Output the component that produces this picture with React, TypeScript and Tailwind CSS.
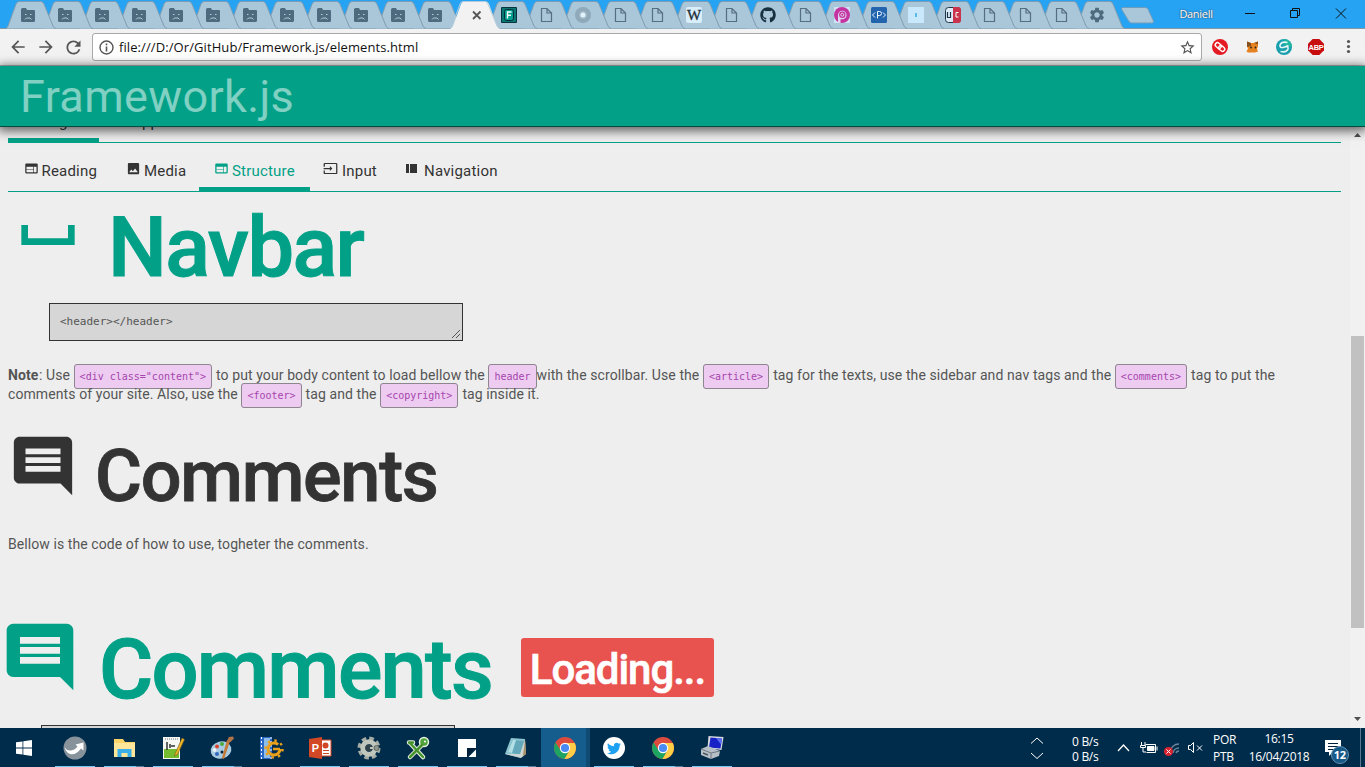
import React from "react";
import { MdWeb, MdImage, MdInput, MdSpaceBar, MdComment, MdSettings, MdStarBorder, MdArrowBack, MdArrowForward, MdRefresh } from "react-icons/md";
import { FaGithub, FaTwitter } from "react-icons/fa";

type TabKind = "sad" | "active" | "e" | "file" | "disc" | "wiki" | "github" | "p" | "code" | "info" | "uc" | "gear";

const tabs: TabKind[] = [
  ...Array<TabKind>(12).fill("sad"),
  "active", "e", "file", "disc", "file", "file", "wiki", "file", "github", "file", "p", "code", "info", "uc", "file", "file", "file", "gear",
];

function TabIcon({ kind }: { kind: TabKind }) {
  switch (kind) {
    case "sad":
      return (
        <g>
          <path d="M1 3.5Q1 2 2.500 2H6L7 4H14Q15 4 15 5V14.500Q15 16 13.500 16H2.500Q1 16 1 14.500Z" fill="#4d6a7f" />
          <path d="M5 8.500h1.500M10 8.500h1.500M5 13.500l1.500-1.500h3.500l1.500 1.500" stroke="#c0d6e4" fill="none" strokeWidth=".9" />
        </g>
      );
    case "file":
      return <path d="M3.500 2.500H9L13.500 7V15.500H3.500ZM9 2.500V7H13.500" fill="none" stroke="#566f80" strokeWidth="1.200" />;
    case "active":
      return <path d="M7.500 5.500L15 13M15 5.500L7.500 13" stroke="#555" strokeWidth="1.800" />;
    case "e":
      return (
        <g>
          <rect x="0" y="1" width="16" height="16" rx="1" fill="#06343e" />
          <rect x="1" y="2" width="14" height="14" fill="#0a7672" />
          <rect x="3.500" y="3.500" width="9" height="11" rx="2" fill="#03a092" stroke="#022f38" />
          <path d="M6.500 12.500V6H10.500M6.500 9.200H10" fill="none" stroke="#fff" strokeWidth="1.400" />
        </g>
      );
    case "disc":
      return (
        <g>
          <circle cx="8" cy="9" r="8" fill="#8fa9ba" />
          <circle cx="8" cy="9" r="4" fill="#a0bac9" />
          <circle cx="8" cy="9" r="2.500" fill="#e3f2fb" />
        </g>
      );
    case "wiki":
      return (
        <g>
          <rect x="0" y="1" width="16" height="16" rx="2" fill="#d8eefb" />
          <text x="8" y="14" textAnchor="middle" fontSize="15" fill="#1c2b35" stroke="#1c2b35" strokeWidth=".3" fontFamily="Liberation Serif">W</text>
        </g>
      );
    case "github":
      return <FaGithub x="0" y="1" width="16" height="16" size={16} color="#17303f" />;
    case "p":
      return (
        <g>
          <rect x="0" y="1" width="16" height="16" fill="#cfe3f4" />
          <circle cx="8" cy="9" r="8" fill="#c334a0" />
          <path d="M4 17V9a4.300 4.300 0 1 1 4.300 4.300H6.500V17Z" fill="#e2d3ee" />
          <circle cx="8.300" cy="8.800" r="3.200" fill="#c334a0" />
          <circle cx="8.300" cy="8.800" r="1.500" fill="none" stroke="#e2d3ee" />
        </g>
      );
    case "code":
      return (
        <g>
          <rect x="0" y="1" width="16" height="16" rx="1.500" fill="#2364ae" />
          <path d="M4 6.500L1.500 9L4 11.500M12 6.500L14.500 9L12 11.500M6.500 12.500V5.500H8.500A1.800 1.800 0 0 1 8.500 9.500H6.500" fill="none" stroke="#e8f4ff" />
        </g>
      );
    case "info":
      return (
        <g>
          <rect x="0" y="1" width="16" height="16" fill="#c9e8fb" />
          <path d="M8 7v4" stroke="#5ebbe9" strokeWidth="2" />
        </g>
      );
    case "uc":
      return (
        <g>
          <rect x="0.500" y="1.500" width="15" height="15" rx="3" fill="#dcebf7" stroke="#203548" />
          <path d="M8 1H13a3 3 0 0 1 3 3V14a3 3 0 0 1-3 3H8Z" fill="#c9344c" />
          <path d="M2.500 6v5.500h3V6" fill="none" stroke="#203548" strokeWidth="1.200" />
          <path d="M13.500 6.500h-2.500v4.500h2.500" fill="none" stroke="#fff" />
        </g>
      );
    case "gear":
      return <MdSettings x="-1" y="0" width="18" height="18" size={18} color="#4d6a7f" />;
  }
}

function ChromeTab({ kind, index }: { kind: TabKind; index: number }) {
  const active = kind === "active";
  return (
    <div
      className={index > 24 ? "relative h-[29px] w-[36px] shrink-0" : "relative h-[29px] w-[37px] shrink-0"}
      style={{ zIndex: active ? 60 : 40 - index }}
    >
      <svg width="52" height="29" className="block max-w-none overflow-visible">
        <path d={active ? "M0 29Q2 28 3 26L11 4Q12 1.500 14 1.500H36Q38 1.500 39 4L47 26Q48 28 50 29Z" : "M0 28.500Q1 28 2 26L10 4Q11 1.500 13 1.500H35Q37 1.500 38 4L47 26Q48 28.500 50 28.500Z"} fill={active ? "#f2f2f2" : "#aac6d9"} />
        <path d="M0 28.500Q1 28 2 26L10 4Q11 1.500 13 1.500H35Q37 1.500 38 4L47 26Q48 28 50 28.500" fill="none" stroke={active ? "#b3cbda" : "#7c9db3"} strokeWidth="1" />
        <g transform={active ? "translate(15.500 6)" : "translate(14 6)"}>
          <TabIcon kind={kind} />
        </g>
      </svg>
    </div>
  );
}

function TitleBar() {
  return (
    <div className="flex h-[29px] shrink-0 border-b border-[#8298a8] bg-[#27a3f3] pl-[6px]">
      {tabs.map((kind, i) => (
        <ChromeTab key={i} kind={kind} index={i} />
      ))}
      <svg width="35" height="28" className="ml-[9px] shrink-0 overflow-visible">
        <path d="M2.500 7.500H25Q27 7.500 28 9L33.500 21Q34 23 32 23H12Q10 23 9 21.500L2 10Q1 8 2.500 7.500Z" fill="#aac6d9" stroke="#6f9dbc" />
      </svg>
      <div className="ml-[16px] w-[50px] pt-[7px] text-center font-['Open_Sans',sans-serif] text-[11px] leading-[14px] tracking-[-0.3px] text-white [text-shadow:0_0_2px_#35506a,0_0_1px_#35506a]">Daniell</div>
      <svg width="120" height="28" className="ml-auto mr-[8px] shrink-0" fill="none" stroke="#111">
        <path d="M8 13.500h10M53.500 10.500h7v7h-7zM55.500 10.500v-2h7v7h-2M99 8.500l10 10M109 8.500l-10 10" />
      </svg>
    </div>
  );
}

function Toolbar() {
  return (
    <div className="flex h-[37px] shrink-0 items-center border-b border-[#b3b3b3] bg-[#f2f2f2] pl-[8px] text-[#555]">
      <MdArrowBack size={20} />
      <MdArrowForward size={20} className="ml-[8px]" />
      <MdRefresh size={21} className="ml-[7px] mr-px" />
      <div className="ml-[7px] flex h-[28px] w-[1110px] shrink-0 items-center rounded-[3px] border border-[#a9a9a9] bg-white pl-[6px] pr-[5px]">
        <svg width="15" height="15" viewBox="0 0 15 15" className="shrink-0">
          <circle cx="7.500" cy="7.500" r="6.500" fill="none" stroke="#555" strokeWidth="1.400" />
          <path d="M7.500 6.500v5M7.500 3.500v1.700" stroke="#555" strokeWidth="1.600" />
        </svg>
        <span className="ml-[5px] whitespace-nowrap font-['Open_Sans','Noto_Sans',sans-serif] text-[13px] leading-[20px] tracking-[0.09px] text-[#111]">file:///D:/Or/GitHub/Framework.js/elements.html</span>
        <MdStarBorder size={17} className="ml-auto" />
      </div>
      <svg width="160" height="36" className="ml-px shrink-0">
        <circle cx="17" cy="18" r="8" fill="#e51b23" />
        <g transform="rotate(40 17 18)" fill="none" stroke="#fff" strokeWidth="1.400">
          <rect x="11.500" y="15.800" width="6.500" height="4.400" rx="2.200" />
          <rect x="16" y="15.800" width="6.500" height="4.400" rx="2.200" />
        </g>
        <path d="M44 12.500l4 1.500h3l4-1.500v5l-1 2 1 3-3 1h-7l-1.500-1 1.500-3-1-2z" fill="#e6821f" />
        <path d="M44 12.500l4 1.500v3l-4 1zM51 14l4-1.500v3z" fill="#85501f" />
        <circle cx="48" cy="18.500" r=".9" fill="#222" />
        <circle cx="52.500" cy="18.500" r=".9" fill="#222" />
        <circle cx="81" cy="18" r="8" fill="#1a9fae" />
        <path d="M81 10a8 8 0 0 1 8 8h-8z" fill="#1fb5a0" />
        <path d="M84.500 13.500q-6-1.500-7.500 2.500q-.5 3 3 2.500q4-1 5.500-2M77.500 22.500q6 1.500 7.500-2.500q.5-2.500-2-2.500" fill="none" stroke="#e5f6f6" strokeWidth="1.600" />
        <path d="M109.700 10h6.600l4.700 4.700v6.600l-4.700 4.700h-6.600l-4.700-4.700v-6.600z" fill="#c70d0d" />
        <text x="113" y="20.900" textAnchor="middle" fontSize="7.500" fontWeight="700" letterSpacing="-.3" fill="#fff" fontFamily="Liberation Sans">ABP</text>
        <circle cx="145.500" cy="12.500" r="1.600" fill="#555" />
        <circle cx="145.500" cy="17.500" r="1.600" fill="#555" />
        <circle cx="145.500" cy="22.500" r="1.600" fill="#555" />
      </svg>
    </div>
  );
}

function NavTab({ icon, label, width, active }: { icon: React.ReactNode; label: string; width: string; active?: boolean }) {
  return (
    <div className={`${width} flex h-[49px] shrink-0 whitespace-nowrap pl-[15px] pt-[18px] text-[15px] leading-[20px] ${active ? "border-b-[5px] border-[#02a187] text-[#02a187]" : "text-[#333]"}`}>
      <span className="w-[18px] shrink-0">{icon}</span>
      <span className="tracking-[0.2px]">{label}</span>
    </div>
  );
}

function SidebarIcon() {
  return (
    <svg width="15" height="15" fill="#333">
      <path d="M0 3h3v9H0zM4 3h7v9H4z" />
    </svg>
  );
}

function Tag({ children, tight }: { children: React.ReactNode; tight?: boolean }) {
  return (
    <code className={`${tight ? "mr-0" : "mr-[4px]"} rounded-[3px] border border-[#8d868f] bg-[#eeccf1] px-[5px] py-[6px] font-['DejaVu_Sans_Mono',monospace] text-[10px] leading-[10px] tracking-normal text-[#a545ad]`}>{children}</code>
  );
}

function PageContent() {
  return (
    <div className="min-w-0 flex-1 overflow-hidden bg-[#eee] pl-[8px] pr-[9px]">
      <div className="-mt-[33px] flex h-[49px] border-b border-[#02a187]">
        <NavTab icon={<MdWeb size={14} />} label="Pages" width="w-[91px] border-b-[5px] border-[#02a187]" />
        <NavTab icon={<MdWeb size={14} />} label="Apps" width="w-[85px]" />
      </div>
      <div className="flex h-[49px] border-b border-[#02a187]">
        <NavTab icon={<MdWeb size={15} />} label="Reading" width="w-[103px] !pl-[15.5px]" />
        <NavTab icon={<MdImage size={15} />} label="Media" width="w-[88px]" />
        <NavTab icon={<MdWeb size={15} />} label="Structure" width="w-[111px]" active />
        <NavTab icon={<MdInput size={15} className="-ml-px" />} label="Input" width="w-[81px] !pl-[14px]" />
        <NavTab icon={<SidebarIcon />} label="Navigation" width="w-[120px]" />
      </div>
      <h1 className="flex h-[111px] pt-[3px] text-[#02a187]">
        <MdSpaceBar size={80} className="shrink-0" />
        <span className="ml-[20px] pt-[4px] text-[83px] font-medium leading-[97px] tracking-[-1.6px] [-webkit-text-stroke:1px_#02a187]">Navbar</span>
      </h1>
      <div className="ml-[41px] flex h-[38px] w-[414px] items-end border border-[#333] bg-[#d6d6d6] pl-[10px] font-['DejaVu_Sans_Mono',monospace] text-[11px] text-[#555]">
        <span className="mb-[10px] leading-[16px]">&lt;header&gt;&lt;/header&gt;</span>
        <svg width="12" height="12" className="ml-auto" stroke="#555">
          <path d="M2 10L10 2M6 10L10 6" />
        </svg>
      </div>
      <p className="mt-[25px] h-[38px] whitespace-nowrap text-[14px] leading-[19px] tracking-[0.095px] text-[#555]">
        <b className="mr-[0.5px]">Note</b>: Use <Tag>{'<div class="content">'}</Tag>to put your body content to load bellow the <Tag tight>header</Tag>with the scrollbar. Use the <Tag>{"<article>"}</Tag>tag for the texts, use the sidebar and nav tags and the <Tag>{"<comments>"}</Tag>tag to put the
        <br />
        comments of your site. Also, use the <Tag>{"<footer>"}</Tag>tag and the <Tag>{"<copyright>"}</Tag>tag inside it.
      </p>
      <h2 className="mt-[27px] flex h-[95px] text-[#333]">
        <MdComment size={70} className="shrink-0" />
        <span className="ml-[17px] pt-[2px] text-[72px] font-medium leading-[88px] tracking-[-1.3px] [-webkit-text-stroke:0.8px_#333]">Comments</span>
      </h2>
      <p className="mt-[9px] text-[14px] leading-[19px] tracking-[0.08px] text-[#555]">Bellow is the code of how to use, togheter the comments.</p>
      <h1 className="-ml-[8px] mt-[63px] flex h-[108px] text-[#02a187]">
        <MdComment size={80} className="shrink-0" />
        <span className="ml-[19px] pt-[4px] text-[83px] font-medium leading-[97px] tracking-[-1.75px] [-webkit-text-stroke:1px_#02a187]">Comments</span>
        <span className="ml-[29px] mt-[21px] h-[59px] w-[193px] rounded-[3px] bg-[#e8534f] text-center text-[42px] font-medium leading-[63px] tracking-[-1.05px] text-white [-webkit-text-stroke:0.6px_#fff]">Loading...</span>
      </h1>
      <div className="ml-[33px] h-[38px] w-[414px] border border-[#333] bg-[#d6d6d6]" />
    </div>
  );
}

function Scrollbar() {
  return (
    <div className="flex w-[15px] shrink-0 flex-col items-center justify-between bg-[#f1f1f1] pb-[7px] pt-[6px]">
      <svg width="7" height="4"><path d="M0 4L3.500 0L7 4Z" fill="#505050" /></svg>
      <div className="mt-[110px] h-[292px] w-[13px] bg-[#c1c1c1]" />
      <svg width="7" height="4"><path d="M0 0L3.500 4L7 0Z" fill="#505050" /></svg>
    </div>
  );
}

function ChromeLogo() {
  return (
    <g>
      <circle cx="12" cy="12" r="11" fill="#dd4b3e" />
      <path d="M2.500 6.500A11 11 0 0 0 11.500 23L16.500 14.500L12 12L7.700 14.500Z" fill="#1da462" />
      <path d="M11.500 23A11 11 0 0 0 21.800 7H12L16.600 14.300Z" fill="#ffcd46" />
      <circle cx="12" cy="12" r="5.200" fill="#fff" />
      <circle cx="12" cy="12" r="4.100" fill="#4a8af4" />
    </g>
  );
}

const apps: { line: "full" | "split" | "none"; active?: boolean; art: React.ReactNode }[] = [
  { line: "full", art: <g><circle cx="12" cy="12" r="11.500" fill="#87929b" /><path d="M1.500 10.500Q3 15 8 14.500Q12 14 14.500 10.500L12.500 8.500L20.500 6.500V14.500L18 12.500Q13 19.500 7 18Q2.500 16.500 1.500 10.500Z" fill="#fff" /></g> },
  { line: "split", art: <g><path d="M2 3h9l2 3h10v15H2z" fill="#f9d467" /><path d="M2 7h21v14H2z" fill="#fde69a" /><path d="M5.500 21v-8h14v8h-4v-4h-6v4z" fill="#3aaee8" /></g> },
  { line: "full", art: <g><path d="M2 1h17v22H2z" fill="#f5f7f2" /><path d="M3 13h15v9H3z" fill="#75bd2e" /><path d="M4 3h13" stroke="#778" strokeDasharray="1 1" /><path d="M6 6v8M9 8v4M10 10h4" stroke="#333" strokeWidth="1.500" /><path d="M14 18L21 2l2.500 1.500-7 15-3 1.500z" fill="#e9b62a" stroke="#79531a" strokeWidth=".6" /></g> },
  { line: "split", art: <g><ellipse cx="11" cy="14" rx="10.500" ry="8.500" transform="rotate(-15 11 14)" fill="#a9cbe2" /><circle cx="4.500" cy="14" r="2" fill="#e8f1f7" /><circle cx="7" cy="10.500" r="2" fill="#d8442f" /><circle cx="12" cy="8" r="2" fill="#4aaa3d" /><circle cx="7" cy="18" r="2" fill="#3467bb" /><circle cx="12" cy="16" r="1.500" fill="#02203a" /><path d="M20 5l-6 18-2-1 5-18z" fill="#c57b36" /><path d="M17 5l2-4 4-.5 1 2-4 4z" fill="#b37547" /></g> },
  { line: "none", art: <g><path d="M1 1h12v22H1z" fill="#2a68c7" /><path d="M5 2h6v20H5z" fill="#8fbde9" /><path d="M2.500 1v22M12 1v22" stroke="#fff" strokeDasharray="2 2" /><circle cx="15" cy="13" r="6" fill="none" stroke="#e9a11c" strokeWidth="3" strokeDasharray="32 6" /><circle cx="15" cy="13" r="8.500" fill="none" stroke="#e9a11c" strokeWidth="2.500" strokeDasharray="2.500 4.180" /><path d="M14 13h7" stroke="#e9a11c" strokeWidth="2.500" fill="none" /></g> },
  { line: "full", art: <g><path d="M12 4h11v16H12z" fill="#fff" stroke="#d24726" /><path d="M15 14.500h6M15 17.500h6" stroke="#d24726" /><circle cx="17.500" cy="9.500" r="3" fill="#d24726" /><path d="M1 3L14 1v22L1 21z" fill="#d24726" /><text x="7.500" y="16" textAnchor="middle" fontSize="11" fontWeight="700" fill="#fff" fontFamily="Liberation Sans">P</text></g> },
  { line: "full", art: <g><circle cx="12" cy="12" r="9.500" fill="none" stroke="#a5ada6" strokeWidth="4" strokeDasharray="4.500 2.960" /><circle cx="12" cy="12" r="6.200" fill="none" stroke="#c1c6bc" strokeWidth="5" /><circle cx="12" cy="12" r="3.500" fill="#31414a" /><path d="M13 12h5" stroke="#c1c6bc" strokeWidth="2" /><circle cx="19.500" cy="12" r="2.500" fill="#8f978f" stroke="#5b665f" /></g> },
  { line: "full", art: <g fill="none" strokeLinecap="round"><path d="M4 7l13 14M17 8L4 21M3 6.500h4" stroke="#e6f2df" strokeWidth="4.500" /><circle cx="18" cy="6" r="4.500" fill="#51a53c" stroke="#e6f2df" strokeWidth="1.500" /><path d="M4 7l13 14M16 9L4 21M3 6.500h4" stroke="#46922f" strokeWidth="2.500" /><circle cx="19" cy="5.500" r="1" fill="#fff" /></g> },
  { line: "full", art: <g><path d="M3 3h18v9h-9v9H3z" fill="#fff" /><path d="M12 21v-9h9z" fill="#02203a" /><path d="M13.500 21l7.500-7.500V21z" fill="#fff" /></g> },
  { line: "split", art: <g><path d="M7 2l14 1-4 19-16-4z" fill="#8cc5d1" /><path d="M9 4l11 1-4 14-12-3z" fill="#63a9bb" /><path d="M12 4l-4 13-4-1L9 4z" fill="#b4dfe5" /><path d="M1 18l16 4 5-4-1-15-5 15z" fill="#cdd6d2" /><path d="M19 20l3-2-1-14z" fill="#a78d63" /></g> },
  { line: "none", active: true, art: <ChromeLogo /> },
  { line: "full", art: <g><circle cx="12" cy="12" r="11" fill="#fff" /><FaTwitter x="5" y="5.500" width="14" height="14" size={14} color="#1da1f2" /></g> },
  { line: "split", art: <ChromeLogo /> },
  { line: "full", art: <g><path d="M8.500 0l15 1-2 13-14-2z" fill="#d8dbe0" /><path d="M10.500 1.500l11.500 1-1.500 10-11.500-1z" fill="#1721c5" /><path d="M16 2l6 .5-1 6z" fill="#5b6ff0" /><path d="M1 13l7-3 12 5-1 5-8 3-10-4z" fill="#b8c0c7" /><path d="M1 13l10 4 9-2M11 17v6" stroke="#6e7882" fill="none" /><path d="M3 17l5 2" stroke="#4a5661" strokeWidth="1.500" /></g> },
];

function Taskbar() {
  return (
    <div className="flex h-[39px] shrink-0 bg-[#002c4b] text-white">
      <div className="flex w-[51px] shrink-0 items-center pl-[16px]">
        <svg width="16" height="16" viewBox="0 0 16 16" fill="#fff">
          <path d="M0 2.300L6.500 1.400V7.600H0zM7.300 1.300L16 0V7.600H7.300zM0 8.400H6.500V14.600L0 13.700zM7.300 8.400H16V16L7.300 14.700z" />
        </svg>
      </div>
      {apps.map((app, i) => (
        <div key={i} className={`relative flex w-[49px] shrink-0 flex-col items-center justify-between ${app.active ? "border-r-[4px] border-[#104b74] bg-[#155d8d] bg-clip-padding" : "pr-px"}`}>
          <svg width="24" height="24" viewBox="0 0 24 24" className={app.active ? "ml-[3px] mt-[8px] overflow-visible" : "mt-[8px] overflow-visible"}>{app.art}</svg>
          {app.line !== "none" && (
            <div className="flex h-px w-[40px]">
              <div className="flex-1 bg-[#76c7f3]" />
              {app.line === "split" && <div className="w-[8px] bg-[#527c98]" />}
            </div>
          )}
        </div>
      ))}
      <div className="ml-auto flex font-['Open_Sans','Noto_Sans',sans-serif] text-[12px] leading-[15px] tracking-[-0.3px]">
        <svg width="14" height="39" fill="none" stroke="#fff" className="mr-[28px]"><path d="M1 15.500L7 10l6 5.500M1 25l6 5.500L13 25" /></svg>
        <div className="w-[45px] pt-[6px]">0 B/s<br />0 B/s</div>
        <svg width="88" height="39" fill="none" stroke="#fff">
          <path d="M1 23L6.500 17L12 23" strokeWidth="1.300" />
          <path d="M28.500 16.500h10v8h-9M40 18.500v4" />
          <path d="M30.500 18.500h6.500v4h-6.500z" fill="#fff" />
          <path d="M24.500 14v3M28 14v3M23.500 17.500h5v2h-5zM26 20v4h3" />
          <g stroke="#6c8498" strokeWidth="1.400"><path d="M53 24a9 9 0 0 1 9-8M56 25a6 6 0 0 1 6-5M59 25a3 3 0 0 1 3-2" /></g>
          <circle cx="51.500" cy="23.500" r="4.500" fill="#d8232f" stroke="none" />
          <path d="M49.500 21.500l4 4M53.500 21.500l-4 4" />
          <path d="M71.500 17.500h2l3-3v10l-3-3h-2zM80 17.500l5 5M85 17.500l-5 5" />
        </svg>
        <div className="ml-[8px] w-[24px] pt-[3px] leading-[17px]">POR<br />PTB</div>
        <div className="ml-[8px] w-[68px] whitespace-nowrap pt-[2px] text-center leading-[18px]">16:15<br />16/04/2018</div>
        <svg width="38" height="39" className="ml-[10px]">
          <path d="M2 12h16v12H10l-4 4v-4H2z" fill="#fff" />
          <path d="M5 15.500h10M5 18.500h10M5 21.500h8" stroke="#02203a" />
          <circle cx="17" cy="27" r="8.500" fill="#175987" stroke="#6090b0" />
          <text x="16.800" y="31" textAnchor="middle" fontSize="11" fontWeight="700" fill="#fff" fontFamily="Open Sans">12</text>
          <path d="M37.500 0v39" stroke="#5a7890" />
        </svg>
        <div className="w-[4px]" />
      </div>
    </div>
  );
}

export default function App() {
  return (
    <div className="flex h-[767px] w-[1365px] flex-col overflow-hidden bg-[#eee] font-[Roboto,sans-serif]">
      <TitleBar />
      <Toolbar />
      <header className="z-10 h-[61px] shrink-0 border-b border-[#064d41] bg-[#02a187] pl-[20px] shadow-[0_2px_10px_2px_rgba(0,0,0,0.6)]">
        <span className="block pt-[4px] text-[45px] leading-[54px] tracking-[0.35px] text-white/50">Framework.js</span>
      </header>
      <main className="flex min-h-0 flex-1">
        <PageContent />
        <Scrollbar />
      </main>
      <div className="z-20 shrink-0"><Taskbar /></div>
    </div>
  );
}
